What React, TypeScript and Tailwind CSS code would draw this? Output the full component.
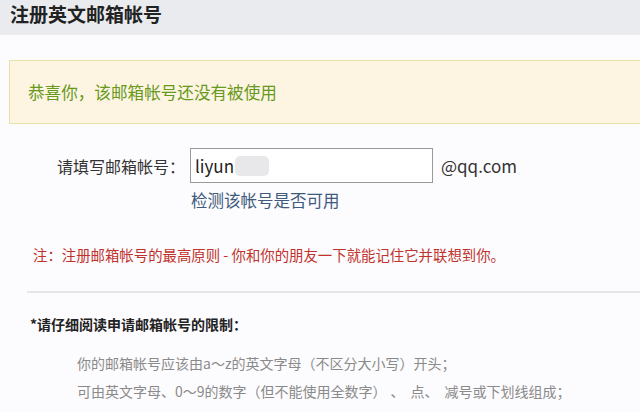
import React from 'react';

const Gap = ({ w }: { w: string }) => <span className={`inline-block ${w}`} />;

export default function App() {
  return (
    <div
      className="w-[640px] h-[412px] overflow-hidden bg-[#fcfbfd] text-[#333]"
      style={{ fontFamily: '"Noto Sans CJK SC", "Noto Sans", sans-serif' }}
    >
      <div className="h-[35px] bg-[#e9ebef] pl-[10px]">
        <h1 className="text-[19px] font-bold leading-[27px] text-[#222]">注册英文邮箱帐号</h1>
      </div>

      <div className="pt-[25px] pl-[9px]">
        <div className="h-[64px] flex items-center pl-[18px] bg-[#fdf4e2] border-y border-l border-[#e6e2a6]">
          <span className="text-[16.6px] text-[#66991c]">恭喜你，该邮箱帐号还没有被使用</span>
        </div>
      </div>

      <div className="mt-[24px] flex items-center">
        <label className="w-[190px] pr-[5px] text-right text-[16px] text-[#333]">请填写邮箱帐号：</label>
        <div className="w-[243px] h-[35px] border border-[#9a9a9a] bg-white flex items-center pl-[4px]">
          <span className="text-[17px] text-[#222]">liyun</span>
          <span className="ml-[1px] w-[34px] h-[20px] rounded-[5px] bg-[#e8e8ea]" />
        </div>
        <span className="ml-[8px] text-[17px] text-[#333]">@qq.com</span>
      </div>

      <div className="pl-[191px] mt-[5px] leading-[24px] text-[16.5px] text-[#3e5a7c]">检测该帐号是否可用</div>

      <p className="pl-[33px] mt-[32px] text-[14.4px] text-[#c0322c]">
        注：注册邮箱帐号的最高原则 - 你和你的朋友一下就能记住它并联想到你。
      </p>

      <div className="ml-[27px] mt-[25px] border-t-2 border-[#e6e6e8]" />

      <p className="pl-[30px] mt-[21px] text-[14px] font-bold text-[#222]">*请仔细阅读申请邮箱帐号的限制：</p>

      <ul className="pl-[77px] mt-[14px] text-[14px] leading-[28px] text-[#8a8a8a]">
        <li>你的邮箱帐号应该由a～z的英文字母（不区分大小写）开头；</li>
        <li>
          可由英文字母、0～9的数字（但不能使用全数字）<Gap w="w-[4px]" />、<Gap w="w-[6px]" />点、<Gap w="w-[6px]" />减号或下划线组成；
        </li>
        <li>长度为3～18个字符；</li>
      </ul>
    </div>
  );
}
